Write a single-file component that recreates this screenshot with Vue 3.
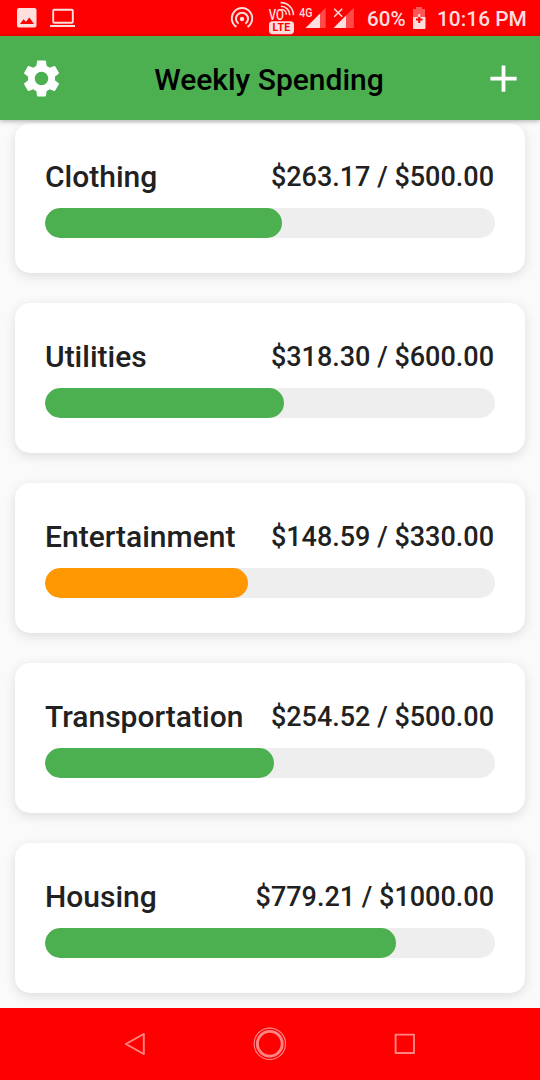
<script setup>
const budgets = [
  { name: 'Clothing', spent: 263.17, limit: 500, color: '#4caf50' },
  { name: 'Utilities', spent: 318.3, limit: 600, color: '#4caf50' },
  { name: 'Entertainment', spent: 148.59, limit: 330, color: '#ff9800' },
  { name: 'Transportation', spent: 254.52, limit: 500, color: '#4caf50' },
  { name: 'Housing', spent: 779.21, limit: 1000, color: '#4caf50' },
]
const money = (n) => '$' + n.toFixed(2)
const fill = (b) => ({ width: (b.spent / b.limit) * 100 + '%', background: b.color })
</script>

<template>
  <div class="screen">
    <header class="status">
      <svg class="notices" viewBox="0 0 80 36" width="80" height="36">
        <path fill="#ffdede" fill-rule="evenodd" d="M19 8H34.5Q36.5 8 36.5 10V25.5Q36.5 27.5 34.5 27.5H19Q17 27.5 17 25.5V10Q17 8 19 8ZM20 24H34L29.3 17.5L26 21.8L23.5 19.2Z" />
        <rect x="53.2" y="9.8" width="19.6" height="13" rx="1" fill="none" stroke="#ffdede" stroke-width="1.9" />
        <path fill="#ffdede" d="M50 25H75V27H50Z" />
      </svg>
      <svg class="signals" viewBox="0 0 140 36" width="140" height="36">
        <g fill="none" stroke="#ffdede" stroke-width="2">
          <path d="M16.5 26.9A10.2 10.2 0 1 1 27.5 26.9" />
          <path d="M18.6 23.7A6 6 0 1 1 25.4 23.7" />
        </g>
        <circle cx="22" cy="19" r="2.2" fill="#ffdede" />
        <text x="48.8" y="19.7" class="vo" textLength="15.2" lengthAdjust="spacingAndGlyphs">VO</text>
        <g fill="none" stroke="#ffdede" stroke-width="1.6">
          <path d="M60.6 2.6A12.5 12.5 0 0 1 73.4 15.3" />
          <path d="M60.8 6.2A8.9 8.9 0 0 1 69.8 15.3" />
          <path d="M61.4 9.5A5.3 5.3 0 0 1 66.4 14.8" />
        </g>
        <rect x="49" y="21.3" width="25" height="12.9" rx="3.6" fill="#ffdede" />
        <text x="61.5" y="31.4" class="lte">LTE</text>
        <text x="79.2" y="16.6" class="gen" textLength="13.2" lengthAdjust="spacingAndGlyphs">4G</text>
        <path fill="#ffdede" d="M85.5 28L100 13.5V28Z" />
        <path fill="#ff4a4a" d="M100 13.5L105.7 7.8V28H100Z" />
        <path fill="#ff4a4a" d="M123 18.5L133.8 7.7V28H126V15.5Z" />
        <path fill="#ffdede" d="M113.5 28L126 15.5V28Z" />
        <path d="M114.2 8.7L122.2 16.7M122.2 8.7L114.2 16.7" stroke="#ffdede" stroke-width="1.5" />
      </svg>
      <span class="percent">60%</span>
      <svg class="battery" viewBox="0 0 14 24" width="14" height="24">
        <path fill="#ff5757" d="M4 1H10V3H13V11H1V3H4Z" />
        <path fill="#ffdede" d="M1 11H13.5V22Q13.5 23 12.5 23H2Q1 23 1 22Z" />
        <path d="M7.2 11V17M4 13.5H10.5" stroke="#f00" stroke-width="2" />
        <path d="M7.2 8V11" stroke="#ffdede" stroke-width="2" />
      </svg>
      <span class="clock">10:16 PM</span>
    </header>

    <div class="appbar">
      <svg class="gear" viewBox="0 0 24 24" width="45" height="45" fill="#fff">
        <path d="M19.14 12.94c.04-.3.06-.61.06-.94 0-.32-.02-.64-.07-.94l2.03-1.58c.18-.14.23-.41.12-.61l-1.92-3.32c-.12-.22-.37-.29-.59-.22l-2.39.96c-.5-.38-1.03-.7-1.62-.94l-.36-2.54c-.04-.24-.24-.41-.48-.41h-3.84c-.24 0-.43.17-.47.41l-.36 2.54c-.59.24-1.13.57-1.62.94l-2.39-.96c-.22-.08-.47 0-.59.22L2.74 8.87c-.12.21-.08.47.12.61l2.03 1.58c-.05.3-.09.63-.09.94s.02.64.07.94l-2.03 1.58c-.18.14-.23.41-.12.61l1.92 3.32c.12.22.37.29.59.22l2.39-.96c.5.38 1.03.7 1.62.94l.36 2.54c.05.24.24.41.48.41h3.84c.24 0 .44-.17.47-.41l.36-2.54c.59-.24 1.13-.56 1.62-.94l2.39.96c.22.08.47 0 .59-.22l1.92-3.32c.12-.22.07-.47-.12-.61l-2.01-1.58zM12 15.6c-1.98 0-3.6-1.62-3.6-3.6s1.62-3.6 3.6-3.6 3.6 1.62 3.6 3.6-1.62 3.6-3.6 3.6z" />
      </svg>
      <h1>Weekly Spending</h1>
      <svg class="add" viewBox="0 0 24 24" width="45" height="45" fill="#fff">
        <path d="M19 13h-6v6h-2v-6H5v-2h6V5h2v6h6v2z" />
      </svg>
    </div>

    <main class="list">
      <section v-for="b in budgets" :key="b.name" class="card">
        <div class="row">
          <span class="name">{{ b.name }}</span>
          <span class="amount">{{ money(b.spent) }} / {{ money(b.limit) }}</span>
        </div>
        <div class="track"><div class="fill" :style="fill(b)"></div></div>
      </section>
    </main>

    <nav class="navbar">
      <svg viewBox="0 0 36 36" width="36" height="36" fill="none" stroke="#ff8585" stroke-width="1.9" stroke-linejoin="round">
        <path d="M8.8 18L26.8 8V28Z" />
      </svg>
      <svg viewBox="0 0 36 36" width="36" height="36" fill="none" stroke="#ff8585">
        <circle cx="17.8" cy="17.8" r="15.7" stroke-width="1.2" />
        <circle cx="17.8" cy="17.8" r="12.4" stroke-width="2.9" />
      </svg>
      <svg viewBox="0 0 36 36" width="36" height="36" fill="none" stroke="#ff8585" stroke-width="1.9" stroke-linejoin="round">
        <rect x="8.6" y="8.6" width="18.4" height="18.4" />
      </svg>
    </nav>
  </div>
</template>

<style>
body { margin: 0; }
</style>

<style scoped>
.screen {
  width: 540px;
  height: 1080px;
  display: flex;
  flex-direction: column;
  overflow: hidden;
  background: #fafafa;
  font-family: Roboto, "Liberation Sans", sans-serif;
  font-weight: 500;
}
.status {
  flex: none;
  height: 36px;
  display: flex;
  align-items: center;
  background: #f00;
  color: #ffdede;
  font-size: 20.9px;
  line-height: 36px;
}
.signals { margin-left: 140px; }
.vo { font-size: 14px; fill: #ffdede; }
.lte { font-size: 10.5px; font-weight: 700; fill: #f00; text-anchor: middle; letter-spacing: 0.3px; }
.gen { font-size: 12px; fill: #ffdede; }
.percent { margin-left: 7px; width: 45px; padding-top: 1px; font-size: 20.6px; }
.battery { margin-top: -1px; }
.clock { margin-left: 11px; padding-top: 1px; white-space: nowrap; }
.appbar {
  flex: none;
  position: relative;
  z-index: 1;
  height: 84px;
  box-sizing: border-box;
  padding: 0 14px 0 19px;
  display: flex;
  align-items: center;
  background: #4caf50;
  box-shadow: 0 1px 5px rgba(0, 0, 0, 0.32);
}
h1 {
  flex: 1;
  margin: 3px 7px 0 0;
  font-size: 30px;
  font-weight: 500;
  line-height: 36px;
  text-align: center;
  color: #000;
}
.list {
  flex: 1;
  min-height: 0;
  overflow: hidden;
  padding: 3px 15px 0;
  display: flex;
  flex-direction: column;
  gap: 30px;
}
.card {
  flex: none;
  height: 150px;
  box-sizing: border-box;
  padding: 34.5px 30px 0;
  border-radius: 15px;
  background: #fff;
  box-shadow: 0 3px 12px rgba(0, 0, 0, 0.12);
}
.row {
  height: 50px;
  display: flex;
  justify-content: space-between;
  line-height: 38px;
  color: #212121;
  white-space: nowrap;
}
.name { font-size: 30px; }
.amount { font-size: 27px; margin-right: 1px; }
.track {
  height: 30px;
  border-radius: 15px;
  background: #eee;
  overflow: hidden;
}
.fill { height: 100%; border-radius: 15px; }
.navbar {
  flex: none;
  height: 72px;
  display: flex;
  align-items: center;
  justify-content: center;
  gap: 99px;
  background: #f00;
}
</style>
